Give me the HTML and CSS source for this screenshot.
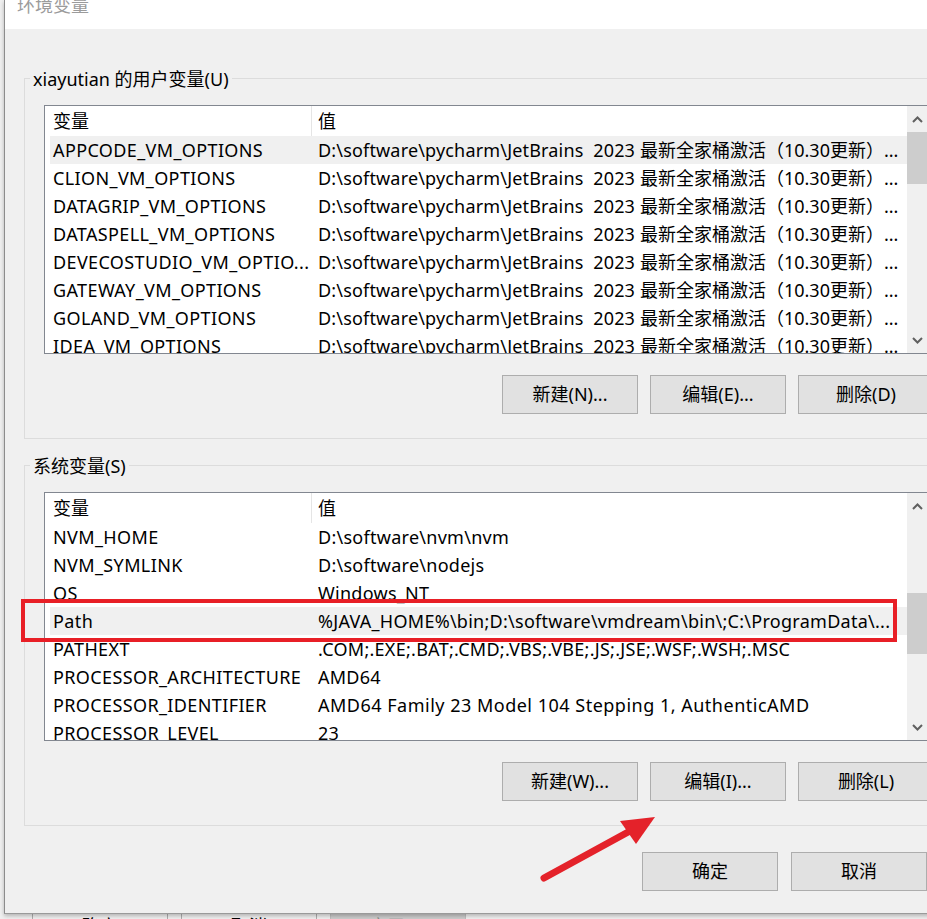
FILE: index.html
```html
<!DOCTYPE html>
<html lang="zh-CN">
<head>
<meta charset="utf-8">
<title>环境变量</title>
<link rel="stylesheet" href="styles.css">
</head>
<body>
<div class="desk">
  <div class="backwin">
    <div class="back-buttons">
      <div class="bbtn">确定</div>
      <div class="bbtn">取消</div>
      <div class="bbtn disabled">应用(A)</div>
    </div>
  </div>

  <div class="dialog">
    <div class="titlebar"><span class="title">环境变量</span></div>
    <div class="dbody">
      <div class="group">
        <div class="legend"><span>xiayutian 的用户变量(U)</span></div>
        <div class="listbox">
          <div class="lv">
            <div class="lv-head"><div class="c1">变量</div><div class="c2">值</div></div>
            <div class="row sel"><div class="c1">APPCODE_VM_OPTIONS</div><div class="c2 jb">D:\software\pycharm\JetBrains&nbsp; 2023 <span class="cjk">最新全家桶激活（10.30更新）...</span></div></div>
            <div class="row"><div class="c1">CLION_VM_OPTIONS</div><div class="c2 jb">D:\software\pycharm\JetBrains&nbsp; 2023 <span class="cjk">最新全家桶激活（10.30更新）...</span></div></div>
            <div class="row"><div class="c1">DATAGRIP_VM_OPTIONS</div><div class="c2 jb">D:\software\pycharm\JetBrains&nbsp; 2023 <span class="cjk">最新全家桶激活（10.30更新）...</span></div></div>
            <div class="row"><div class="c1">DATASPELL_VM_OPTIONS</div><div class="c2 jb">D:\software\pycharm\JetBrains&nbsp; 2023 <span class="cjk">最新全家桶激活（10.30更新）...</span></div></div>
            <div class="row"><div class="c1">DEVECOSTUDIO_VM_OPTIO...</div><div class="c2 jb">D:\software\pycharm\JetBrains&nbsp; 2023 <span class="cjk">最新全家桶激活（10.30更新）...</span></div></div>
            <div class="row"><div class="c1">GATEWAY_VM_OPTIONS</div><div class="c2 jb">D:\software\pycharm\JetBrains&nbsp; 2023 <span class="cjk">最新全家桶激活（10.30更新）...</span></div></div>
            <div class="row"><div class="c1">GOLAND_VM_OPTIONS</div><div class="c2 jb">D:\software\pycharm\JetBrains&nbsp; 2023 <span class="cjk">最新全家桶激活（10.30更新）...</span></div></div>
            <div class="row"><div class="c1">IDEA_VM_OPTIONS</div><div class="c2 jb">D:\software\pycharm\JetBrains&nbsp; 2023 <span class="cjk">最新全家桶激活（10.30更新）...</span></div></div>
          </div>
          <div class="vscroll">
            <div class="sbtn"><svg width="11" height="7" viewBox="0 0 11 7"><polyline points="1,6 5.5,1.5 10,6" fill="none" stroke="#606060" stroke-width="2"/></svg></div>
            <div class="thumb thumb-user"></div>
            <div class="track"></div>
            <div class="sbtn"><svg width="11" height="7" viewBox="0 0 11 7"><polyline points="1,1 5.5,5.5 10,1" fill="none" stroke="#606060" stroke-width="2"/></svg></div>
          </div>
        </div>
        <div class="btnrow">
          <div class="btn">新建(N)...</div>
          <div class="btn">编辑(E)...</div>
          <div class="btn">删除(D)</div>
        </div>
      </div>

      <div class="group group-sys">
        <div class="legend"><span>系统变量(S)</span></div>
        <div class="listbox">
          <div class="lv">
            <div class="lv-head"><div class="c1">变量</div><div class="c2">值</div></div>
            <div class="row"><div class="c1">NVM_HOME</div><div class="c2">D:\software\nvm\nvm</div></div>
            <div class="row"><div class="c1">NVM_SYMLINK</div><div class="c2">D:\software\nodejs</div></div>
            <div class="row"><div class="c1">OS</div><div class="c2">Windows_NT</div></div>
            <div class="row sel"><div class="c1">Path</div><div class="c2">%JAVA_HOME%\bin;D:\software\vmdream\bin\;C:\ProgramData\...</div></div>
            <div class="row"><div class="c1">PATHEXT</div><div class="c2">.COM;.EXE;.BAT;.CMD;.VBS;.VBE;.JS;.JSE;.WSF;.WSH;.MSC</div></div>
            <div class="row"><div class="c1">PROCESSOR_ARCHITECTURE</div><div class="c2">AMD64</div></div>
            <div class="row"><div class="c1">PROCESSOR_IDENTIFIER</div><div class="c2 wide">AMD64 Family 23 Model 104 Stepping 1, AuthenticAMD</div></div>
            <div class="row"><div class="c1">PROCESSOR_LEVEL</div><div class="c2">23</div></div>
          </div>
          <div class="vscroll">
            <div class="sbtn"><svg width="11" height="7" viewBox="0 0 11 7"><polyline points="1,6 5.5,1.5 10,6" fill="none" stroke="#606060" stroke-width="2"/></svg></div>
            <div class="thumb thumb-sys"></div>
            <div class="track"></div>
            <div class="sbtn"><svg width="11" height="7" viewBox="0 0 11 7"><polyline points="1,1 5.5,5.5 10,1" fill="none" stroke="#606060" stroke-width="2"/></svg></div>
          </div>
        </div>
        <div class="btnrow">
          <div class="btn">新建(W)...</div>
          <div class="btn">编辑(I)...</div>
          <div class="btn">删除(L)</div>
        </div>
      </div>

      <div class="footer">
        <div class="btn">确定</div>
        <div class="btn">取消</div>
      </div>
    </div>
  </div>

  <div class="highlight-box"></div>
  <svg class="arrow" width="927" height="919" viewBox="0 0 927 919">
    <line x1="544" y1="878" x2="630" y2="831" stroke="#e4222a" stroke-width="7" stroke-linecap="round"/>
    <polygon points="655,817 620,821 636,844" fill="#e4222a"/>
  </svg>
</div>
</body>
</html>
```

FILE: styles.css
```css
html, body {
  margin: 0;
  padding: 0;
  width: 927px;
  height: 919px;
  overflow: hidden;
  background: #f0f0f0;
}

.desk {
  position: relative;
  width: 927px;
  height: 919px;
  overflow: hidden;
  font-family: "Noto Sans", "Noto Sans CJK SC", sans-serif;
  font-size: 18px;
  color: #000;
}

/* window behind the dialog */
.backwin {
  position: absolute;
  left: 0;
  top: 0;
  width: 927px;
  height: 919px;
  background: #f0f0f0;
}

.back-buttons {
  position: absolute;
  left: 32px;
  top: 898px;
  display: flex;
  gap: 13px;
}

.bbtn {
  width: 134px;
  height: 40px;
  border: 1px solid #adadad;
  background: #f0f0f0;
  text-align: center;
  line-height: 54px;
  font-size: 18px;
  color: #000;
}

.bbtn.disabled {
  background: #cccccc;
  border-color: #bfbfbf;
  color: #8a8a8a;
}

/* the dialog */
.dialog {
  position: absolute;
  left: 4px;
  top: 0;
  width: 980px;
  height: 914px;
  box-sizing: border-box;
  background: #f0f0f0;
  border-left: 1px solid #8c8c8c;
  border-bottom: 1px solid #9a9a9a;
  box-shadow: 0 2px 4px rgba(0, 0, 0, 0.25);
}

.titlebar {
  height: 29px;
  background: #fff;
  overflow: hidden;
  padding-left: 12px;
}

.title {
  display: block;
  margin-top: -4px;
  line-height: 18px;
  font-size: 18px;
  color: #9b9b9b;
}

.dbody {
  padding: 49px 0 0 19px;
}

.group {
  width: 928px;
  box-sizing: border-box;
  border: 1px solid #dcdcdc;
  padding: 0 0 24px 19px;
}

.group-sys {
  margin-top: 26px;
}

.legend {
  margin-top: -13px;
  height: 26px;
  line-height: 26px;
  font-size: 18px;
}

.legend span {
  display: inline-block;
  margin-left: -14px;
  padding: 0 3px;
  background: #f0f0f0;
}

.listbox {
  margin-top: 13px;
  width: 884px;
  height: 249px;
  box-sizing: border-box;
  border: 1px solid #828790;
  background: #fff;
  display: flex;
}

.lv {
  flex: 1;
  overflow: hidden;
}

.lv-head,
.row {
  display: flex;
  margin-left: 5px;
  white-space: nowrap;
  overflow: hidden;
}

.lv-head {
  height: 30px;
  line-height: 30px;
}

.row {
  height: 28px;
  line-height: 28px;
}

.row.sel {
  background: #f0f0f0;
}

.c1 {
  width: 262px;
  flex: none;
  box-sizing: border-box;
  padding-left: 3px;
  overflow: hidden;
}

.row .c1 {
  letter-spacing: 0.38px;
}

.lv-head .c1 {
  border-right: 1px solid #e5e5e5;
}

.c2 {
  flex: 1;
  padding-left: 6px;
  overflow: hidden;
}

.row .c2 {
  letter-spacing: 0.27px;
}

.row .c2.jb {
  letter-spacing: 0.17px;
}

.row .c2.wide {
  letter-spacing: 0.5px;
}

.row .c2 .cjk {
  letter-spacing: 0;
}

.vscroll {
  width: 20px;
  flex: none;
  background: #f0f0f0;
  display: flex;
  flex-direction: column;
}

.sbtn {
  height: 26px;
  flex: none;
  display: flex;
  align-items: center;
  justify-content: center;
}

.thumb {
  flex: none;
  background: #cdcdcd;
}

.thumb-user {
  margin-top: 0;
  height: 52px;
}

.thumb-sys {
  margin-top: 74px;
  height: 61px;
}

.track {
  flex: 1;
}

.btnrow {
  width: 890px;
  margin-top: 21px;
  display: flex;
  justify-content: flex-end;
  gap: 12px;
}

.btn {
  width: 136px;
  height: 39px;
  box-sizing: border-box;
  border: 1px solid #adadad;
  background: #e1e1e1;
  text-align: center;
  line-height: 37px;
  font-size: 18px;
  white-space: nowrap;
}

.footer {
  width: 903px;
  margin-top: 26px;
  display: flex;
  justify-content: flex-end;
  gap: 13px;
}

/* annotations drawn over the screenshot */
.highlight-box {
  position: absolute;
  left: 21px;
  top: 599px;
  width: 876px;
  height: 43px;
  box-sizing: border-box;
  border: 4px solid #e81f26;
}

.arrow {
  position: absolute;
  left: 0;
  top: 0;
}
```
